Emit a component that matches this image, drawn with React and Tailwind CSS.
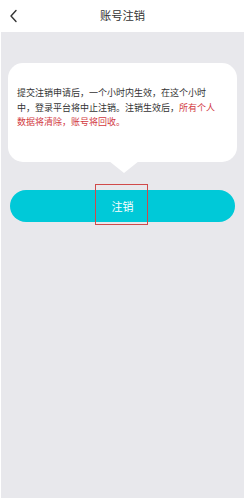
export default function App() {
  const font = { fontFamily: '"Noto Sans CJK SC", "Noto Sans", sans-serif' };
  return (
    <div className="w-[245px] h-[499px] bg-white flex flex-col" style={font}>
      <div className="h-[32px] flex items-center relative shrink-0">
        <svg className="absolute left-[9px] top-[9px]" width="9" height="14" viewBox="0 0 9 14">
          <path d="M7 1.5 L2 7 L7 12.5" fill="none" stroke="#333" strokeWidth="1.4" strokeLinecap="round" strokeLinejoin="round" />
        </svg>
        <div className="w-full text-center text-[11.3px] text-[#333] leading-none">账号注销</div>
      </div>
      <div className="flex-1 mx-[1px] mb-[1px] bg-[#e8e8ec] flex flex-col pt-[31px]">
        <div className="relative mx-[7px] h-[99px] bg-white rounded-[15px] pl-[9px] pt-[23px]">
          <p className="text-[9px] leading-[14.5px] text-[#333] whitespace-nowrap">
            提交注销申请后，一个小时内生效，在这个小时
            <br />
            中，登录平台将中止注销。注销生效后，
            <span className="text-[#d23a3f]">所有个人</span>
            <br />
            <span className="text-[#d23a3f]">数据将清除，账号将回收。</span>
          </p>
          <svg className="absolute left-[101px] top-[98px]" width="30" height="12" viewBox="0 0 30 12">
            <path d="M0 0 L30 0 L15 12 Z" fill="#fff" />
          </svg>
        </div>
        <div className="relative mx-[9px] mt-[28px] h-[32px] rounded-full bg-[#00c9d8] flex items-center justify-center">
          <span className="text-white text-[11px]">注销</span>
          <div className="absolute left-[85px] top-[-6px] w-[53px] h-[41px] border border-[#d04a4a]" />
        </div>
      </div>
    </div>
  );
}
